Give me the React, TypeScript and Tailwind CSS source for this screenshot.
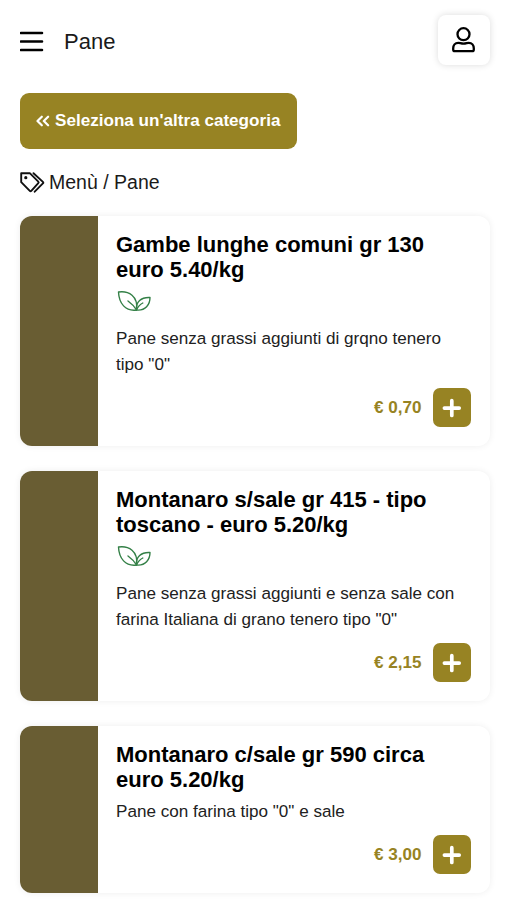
/**
 * Menu category page: header, back button, breadcrumb and product cards.
 */

interface Product {
  name: string[];
  description: string[];
  price: string;
  vegan?: boolean;
}

const PRODUCTS: Product[] = [
  {
    name: ["Gambe lunghe comuni gr 130", "euro 5.40/kg"],
    description: ["Pane senza grassi aggiunti di grqno tenero", 'tipo "0"'],
    price: "€ 0,70",
    vegan: true,
  },
  {
    name: ["Montanaro s/sale gr 415 - tipo", "toscano - euro 5.20/kg"],
    description: ["Pane senza grassi aggiunti e senza sale con", 'farina Italiana di grano tenero tipo "0"'],
    price: "€ 2,15",
    vegan: true,
  },
  {
    name: ["Montanaro c/sale gr 590 circa", "euro 5.20/kg"],
    description: ['Pane con farina tipo "0" e sale'],
    price: "€ 3,00",
  },
];

// ─── Icons ────────────────────────────────────────────────────────────────────

function MenuIcon() {
  return (
    <svg className="w-6 h-[21px]" viewBox="0 0 24 21" fill="none" stroke="#000" strokeWidth="2.6" strokeLinecap="round" aria-hidden="true">
      <path d="M1 2h21M1 10.500h21M1 19h21" />
    </svg>
  );
}

function UserIcon() {
  return (
    <svg className="w-6 h-[26px]" viewBox="0 0 24 26" fill="none" stroke="#000" strokeWidth="2.300" strokeLinejoin="round" aria-hidden="true">
      <circle cx="11.500" cy="7.200" r="6" />
      <path d="M6.300 15.800C3 15.800 1.200 18.300 1.200 21.300v1.200c0 1 .7 1.700 1.700 1.700h17.200c1 0 1.700-.7 1.700-1.700v-1.200c0-3-1.800-5.500-5.100-5.500-1.500 0-2.900.9-5.200.9s-3.700-.9-5.200-.9Z" />
    </svg>
  );
}

function AngleDoubleLeftIcon() {
  return (
    <svg className="w-3.5 h-3" viewBox="0 0 14 12" fill="none" stroke="currentColor" strokeWidth="2.200" strokeLinecap="round" strokeLinejoin="round" aria-hidden="true">
      <path d="M5.800 1.700 1.500 6l4.300 4.300M12.100 1.700 7.800 6l4.300 4.300" />
    </svg>
  );
}

function TagsIcon() {
  return (
    <svg className="w-[25px] h-[21px]" viewBox="0 0 25 21" fill="none" stroke="#111" strokeWidth="1.900" strokeLinejoin="round" strokeLinecap="round" aria-hidden="true">
      <path d="M1.200 1.200h8.600l8.500 8.500c.5.500.5 1 0 1.500l-7 7.600c-.5.500-1 .5-1.500 0L1.200 10.200Z" />
      <path d="M13.500 1.200l9.400 8.700c.5.500.5 1 0 1.500l-8.200 8.300" />
      <circle cx="5.800" cy="5.700" r="1.600" fill="#111" stroke="none" />
    </svg>
  );
}

function LeavesIcon() {
  return (
    <svg className="w-[34px] h-[22px]" viewBox="0 0 34 22" fill="none" stroke="#348047" strokeWidth="1.400" strokeLinejoin="round" strokeLinecap="round" aria-hidden="true">
      <path d="M19.500 20C8.500 21.500 2 13.500 1.500 2 11.500.5 21.500 6 19.500 20Z" />
      <path d="M19.500 20c-.8-8 4.500-13 13.500-12.500C33 14.500 28.500 21 19.500 20Z" />
      <path d="M11 11c3.200 2.300 6.200 5 8.500 9 1-2.800 3-5.200 6.300-7" />
    </svg>
  );
}

function PlusIcon() {
  return (
    <svg className="w-5 h-5" viewBox="0 0 20 20" fill="none" stroke="#fff" strokeWidth="3.700" strokeLinecap="round" aria-hidden="true">
      <path d="M9.800 2.700v14.800M2.400 10.100h14.800" />
    </svg>
  );
}

// ─── Product card ─────────────────────────────────────────────────────────────

function ProductCard({ product }: { product: Product }) {
  return (
    <article className="flex overflow-hidden rounded-[12px] bg-white shadow-[0_0_7px_rgba(0,0,0,0.07)]">
      <div className="w-[78px] shrink-0 bg-[#695d33]" />
      <div className="flex-1 pl-[18px] pr-[19.500px] pt-[17px] pb-[19px]">
        <h2 className="text-[22px] leading-[24.500px] font-bold text-black whitespace-nowrap">
          {product.name.map((line) => (
            <span key={line} className="block">{line}</span>
          ))}
        </h2>
        {product.vegan && (
          <div className="h-[37px] pl-px pt-2">
            <LeavesIcon />
          </div>
        )}
        <p className="mt-[7px] text-[17.100px] leading-[26px] text-[#212121] whitespace-nowrap">
          {product.description.map((line) => (
            <span key={line} className="block">{line}</span>
          ))}
        </p>
        <div className="mt-2.5 flex items-center justify-end gap-[11px]">
          <span className="text-[17.100px] font-bold text-[#978323]">{product.price}</span>
          <button className="flex h-[39px] w-[38px] items-center justify-center rounded-[7px] bg-[#978323]" aria-label="Aggiungi">
            <PlusIcon />
          </button>
        </div>
      </div>
    </article>
  );
}

// ─── Page ─────────────────────────────────────────────────────────────────────

export default function App() {
  return (
    <main className="h-[900px] overflow-hidden bg-white px-5 pt-[15px] font-['Liberation_Sans',Arial,sans-serif]">
      <header className="-mr-[3px] flex h-[50px] items-center">
        <button className="pt-[2px]" aria-label="Menu"><MenuIcon /></button>
        <h1 className="ml-5 flex-1 pt-[3px] text-[22px] text-[#1a1a1a]">Pane</h1>
        <button className="flex h-[50px] w-[52px] items-center justify-center rounded-[8px] bg-white shadow-[0_0_7px_rgba(0,0,0,0.14)]" aria-label="Profilo">
          <UserIcon />
        </button>
      </header>

      <button className="mt-7 flex h-14 w-[277px] items-center gap-[5px] rounded-[9px] bg-[#978323] pl-4 text-[17.100px] font-bold whitespace-nowrap text-white">
        <AngleDoubleLeftIcon />
        Seleziona un'altra categoria
      </button>

      <nav className="mt-5 flex h-[26px] items-center gap-1 text-[19.500px] text-[#1a1a1a]">
        <TagsIcon />
        <span className="pt-[2px]">Menù / Pane</span>
      </nav>

      <div className="mt-[21px] -mr-px flex w-[470px] flex-col gap-[25px]">
        {PRODUCTS.map((product) => (
          <ProductCard key={product.price} product={product} />
        ))}
      </div>
    </main>
  );
}
